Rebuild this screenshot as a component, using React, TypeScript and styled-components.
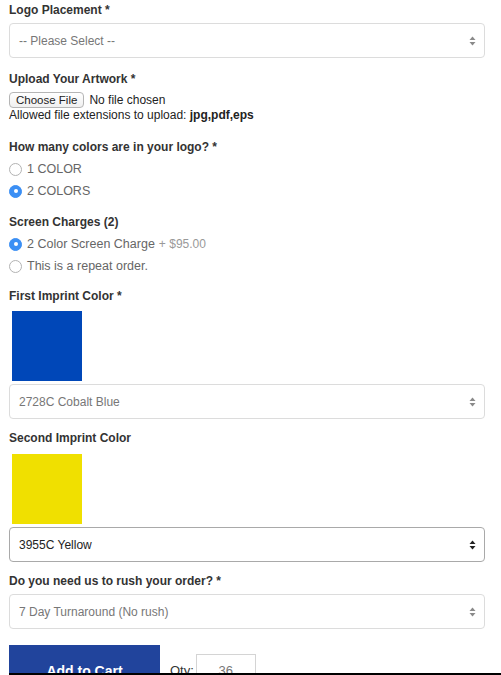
import styled, { createGlobalStyle } from "styled-components";

const GlobalStyle = createGlobalStyle`
  html, body {
    margin: 0;
    padding: 0;
    background: #fff;
  }
  body {
    font-family: "Liberation Sans", Arial, Helvetica, sans-serif;
    color: #333;
  }
`;

const Form = styled.div`
  display: flex;
  flex-direction: column;
  padding: 2px 16px 0 9px;
  overflow: hidden;
  height: 675px;
  box-sizing: border-box;
`;

const Field = styled.div<{ $gap?: number }>`
  display: flex;
  flex-direction: column;
  margin-bottom: ${(p) => p.$gap ?? 11}px;
`;

const Label = styled.div<{ $space?: number }>`
  font-size: 12px;
  font-weight: bold;
  line-height: 16px;
  color: #333;
  margin-bottom: ${(p) => p.$space ?? 5}px;
`;

const SelectBox = styled.div<{ $active?: boolean }>`
  display: flex;
  align-items: center;
  justify-content: space-between;
  height: 35px;
  box-sizing: border-box;
  padding: 0 8px 0 9px;
  border: 1px solid ${(p) => (p.$active ? "#a9a9a9" : "#dcdcdc")};
  border-radius: 4px;
  font-size: 12px;
  color: ${(p) => (p.$active ? "#222" : "#777")};
  background: #fff;
`;

const FileRow = styled.div`
  display: flex;
  align-items: center;
  gap: 5px;
  font-size: 12px;
  color: #222;
`;

const FileButton = styled.button`
  height: 16px;
  box-sizing: border-box;
  padding: 0 6px;
  border: 1px solid #b5b5b5;
  border-radius: 4px;
  background: linear-gradient(#fff, #f0f0f0);
  font-family: inherit;
  font-size: 11.5px;
  line-height: 14px;
  color: #222;
`;

const Note = styled.div`
  font-size: 12px;
  line-height: 14px;
  color: #222;
  b {
    font-weight: bold;
  }
`;

const RadioRow = styled.div`
  display: flex;
  align-items: center;
  height: 22px;
  gap: 5px;
  font-size: 12.5px;
  color: #666;
`;

const Radio = styled.span<{ $on?: boolean }>`
  width: 13px;
  height: 13px;
  box-sizing: border-box;
  border-radius: 50%;
  display: flex;
  align-items: center;
  justify-content: center;
  background: ${(p) => (p.$on ? "#3b8ff4" : "#fff")};
  border: 1px solid ${(p) => (p.$on ? "#3b8ff4" : "#b3b3b3")};
  &::after {
    content: "";
    width: 4px;
    height: 4px;
    border-radius: 50%;
    background: ${(p) => (p.$on ? "#fff" : "transparent")};
  }
`;

const Price = styled.span`
  margin-left: 4px;
  font-size: 12px;
  color: #999;
`;

const Swatch = styled.div<{ $color: string }>`
  width: 70px;
  height: 70px;
  margin: 0 0 3px 3px;
  background: ${(p) => p.$color};
`;

const CartRow = styled.div`
  display: flex;
  align-items: flex-start;
  margin-top: 5px;
`;

const CartButton = styled.button`
  width: 151px;
  height: 56px;
  border: none;
  background: #21449c;
  color: #fff;
  font-family: inherit;
  font-size: 14px;
  font-weight: bold;
  padding: 0 0 4px;
`;

const QtyLabel = styled.span`
  margin: 18px 2px 0 10px;
  font-size: 13px;
  line-height: 16px;
  color: #333;
`;

const QtyInput = styled.div`
  width: 60px;
  height: 34px;
  box-sizing: border-box;
  margin-top: 9px;
  border: 1px solid #d4d4d4;
  text-align: center;
  font-size: 13px;
  line-height: 16px;
  color: #777;
  padding-top: 8px;
`;

const BottomRule = styled.div`
  position: fixed;
  left: 9px;
  right: 0;
  bottom: 0;
  height: 2px;
  background: #000;
`;

function Arrows({ dark }: { dark?: boolean }) {
  const c = dark ? "#222" : "#8a8a8a";
  return (
    <svg width="7" height="10" viewBox="0 0 7 10">
      <path d="M3.5 0.5 L6.5 4 L0.5 4 Z" fill={c} />
      <path d="M3.5 9.5 L6.5 6 L0.5 6 Z" fill={c} />
    </svg>
  );
}

function Select({ value, active }: { value: string; active?: boolean }) {
  return (
    <SelectBox $active={active}>
      <span>{value}</span>
      <Arrows dark={active} />
    </SelectBox>
  );
}

export default function App() {
  return (
    <>
      <GlobalStyle />
      <Form>
        <Field $gap={13}>
          <Label>Logo Placement *</Label>
          <Select value="-- Please Select --" />
        </Field>
        <Field $gap={17}>
          <Label>Upload Your Artwork *</Label>
          <FileRow>
            <FileButton>Choose File</FileButton>
            <span>No file chosen</span>
          </FileRow>
          <Note>
            Allowed file extensions to upload: <b>jpg,pdf,eps</b>
          </Note>
        </Field>
        <Field $gap={12}>
          <Label $space={3}>How many colors are in your logo? *</Label>
          <RadioRow>
            <Radio />
            1 COLOR
          </RadioRow>
          <RadioRow>
            <Radio $on />2 COLORS
          </RadioRow>
        </Field>
        <Field $gap={11}>
          <Label $space={3}>Screen Charges (2)</Label>
          <RadioRow>
            <Radio $on />
            <span>
              2 Color Screen Charge<Price>+ $95.00</Price>
            </span>
          </RadioRow>
          <RadioRow>
            <Radio />
            This is a repeat order.
          </RadioRow>
        </Field>
        <Field $gap={11}>
          <Label $space={7}>First Imprint Color *</Label>
          <Swatch $color="#0047b8" />
          <Select value="2728C Cobalt Blue" />
        </Field>
        <Field $gap={11}>
          <Label $space={8}>Second Imprint Color</Label>
          <Swatch $color="#f0e000" />
          <Select value="3955C Yellow" active />
        </Field>
        <Field $gap={11}>
          <Label>Do you need us to rush your order? *</Label>
          <Select value="7 Day Turnaround (No rush)" />
        </Field>
        <CartRow>
          <CartButton>Add to Cart</CartButton>
          <QtyLabel>Qty:</QtyLabel>
          <QtyInput>36</QtyInput>
        </CartRow>
      </Form>
      <BottomRule />
    </>
  );
}
